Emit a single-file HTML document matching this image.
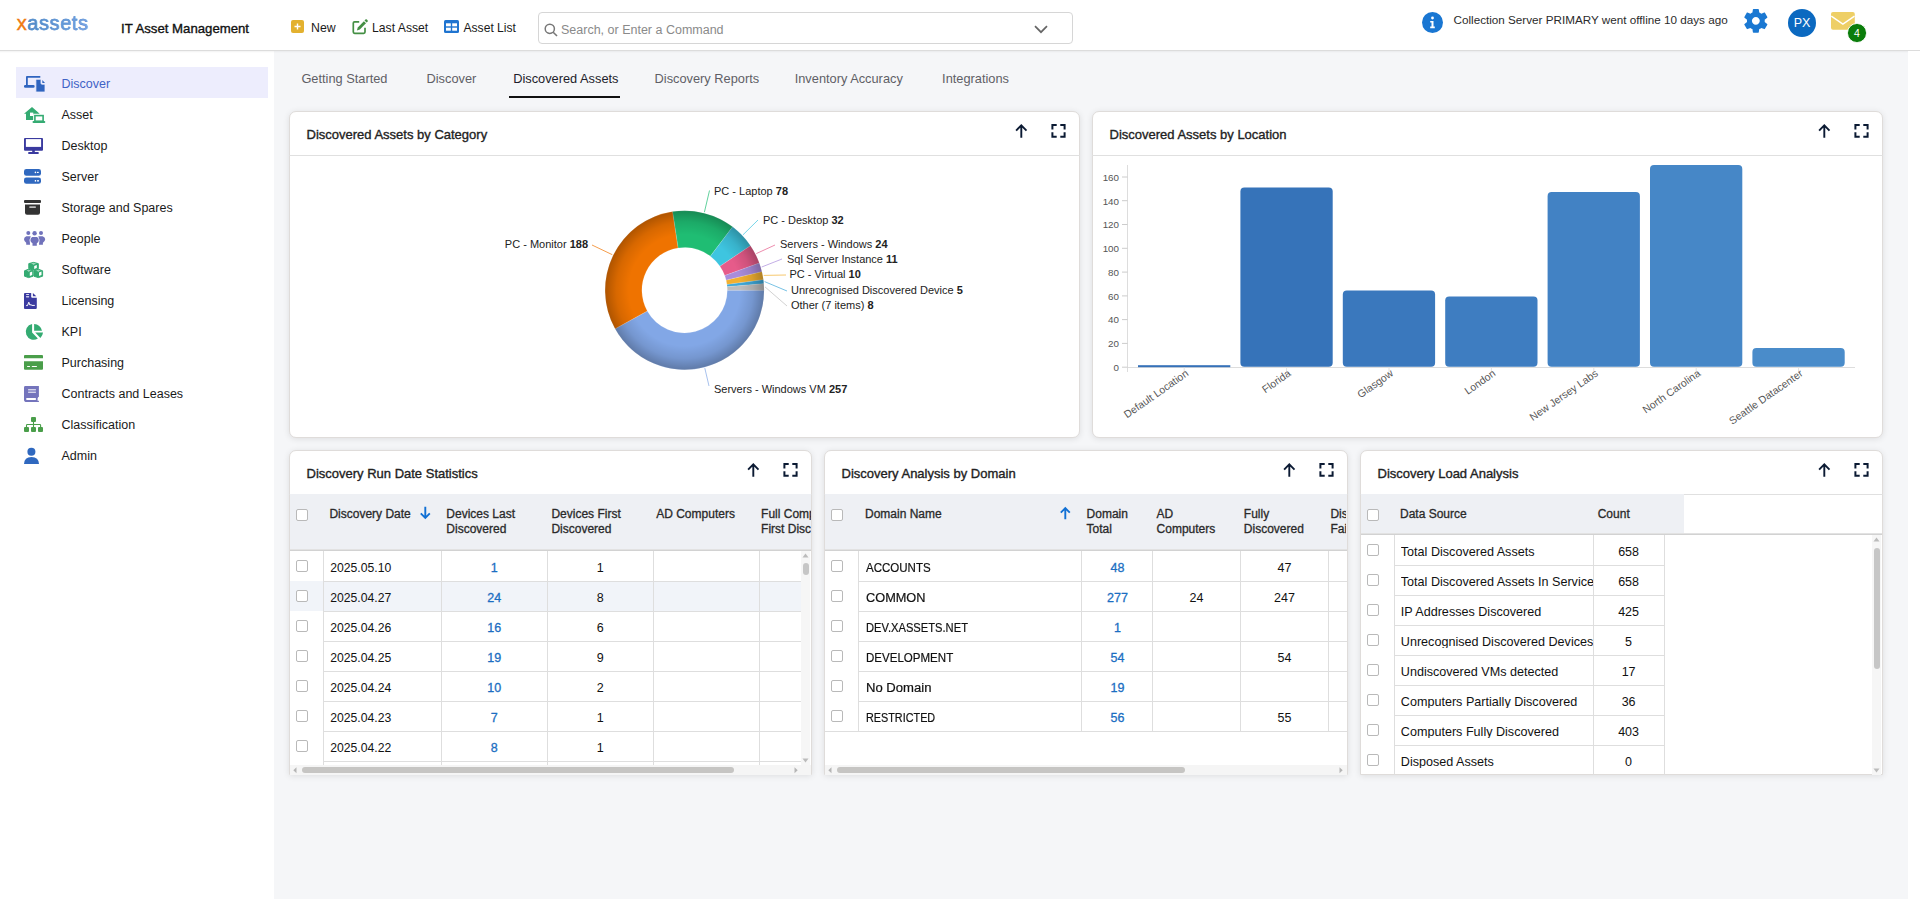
<!DOCTYPE html><html><head><meta charset="utf-8"><style>
html,body{margin:0;padding:0;}
body{width:1920px;height:911px;overflow:hidden;position:relative;background:#fff;font-family:"Liberation Sans",sans-serif;}
.t{position:absolute;white-space:nowrap;line-height:1;}
.r{position:absolute;box-sizing:border-box;}
svg{position:absolute;overflow:visible;}
</style></head><body>
<div class="r" style="left:274px;top:51px;width:1634px;height:848px;background:#f5f6f8;"></div>
<div class="r" style="left:0px;top:0px;width:1920px;height:50px;background:#fff;"></div>
<div class="r" style="left:0px;top:50px;width:1920px;height:1px;background:#dcdcdc;"></div>
<div class="r" style="left:0px;top:51px;width:1920px;height:2px;background:linear-gradient(rgba(0,0,0,0.05),rgba(0,0,0,0));"></div>
<div class="t" style="left:16.8px;top:13.2px;font-size:20px;letter-spacing:0.55px;-webkit-text-stroke:0.45px #5a8fd0;"><span style="color:#ef7a12;-webkit-text-stroke:0.45px #ef7a12">x</span><span style="background:linear-gradient(90deg,#4a8ac4,#7aa6e8);-webkit-background-clip:text;background-clip:text;color:transparent">assets</span></div>
<div class="t" style="left:121px;top:22.23px;font-size:13.2px;color:#111;-webkit-text-stroke:0.35px #111;">IT Asset Management</div>
<svg style="left:291px;top:20px" width="13" height="13" viewBox="0 0 13 13"><rect x="0" y="0" width="13" height="13" rx="2" fill="#e3b12f"/><path d="M6.5 3.5v6M3.5 6.5h6" stroke="#fff" stroke-width="1.4"/></svg>
<div class="t" style="left:311px;top:21.99px;font-size:12.3px;color:#1a1a1a;">New</div>
<svg style="left:352px;top:19px" width="16" height="16" viewBox="0 0 16 16"><path d="M7.2 2.8H2.6a1.3 1.3 0 0 0-1.3 1.3v8.9a1.3 1.3 0 0 0 1.3 1.3h9.1a1.3 1.3 0 0 0 1.3-1.3V8.8" fill="none" stroke="#448f44" stroke-width="1.7"/><path d="M13.4 0.6a1 1 0 0 1 1.5 0l0.6 0.6a1 1 0 0 1 0 1.5l-0.9 0.9-2.1-2.1z" fill="#448f44"/><path d="M11.9 2.2l2.1 2.1-6.2 6.2-2.9 0.9 0.9-2.9z" fill="#448f44"/></svg>
<div class="t" style="left:372px;top:22.07px;font-size:12.2px;color:#1a1a1a;">Last Asset</div>
<svg style="left:444px;top:20px" width="15" height="13" viewBox="0 0 15 13"><rect x="0" y="0" width="15" height="13" rx="1.5" fill="#1f74d0"/><rect x="2" y="3.3" width="4.8" height="3" fill="#fff"/><rect x="8.2" y="3.3" width="4.8" height="3" fill="#fff"/><rect x="2" y="7.7" width="4.8" height="3" fill="#fff"/><rect x="8.2" y="7.7" width="4.8" height="3" fill="#fff"/></svg>
<div class="t" style="left:463.5px;top:22.16px;font-size:12.1px;color:#1a1a1a;">Asset List</div>
<div class="r" style="left:538px;top:12px;width:535px;height:32px;border:1px solid #d6d6d6;border-radius:4px;background:#fff;"></div>
<svg style="left:544px;top:23px" width="14" height="14" viewBox="0 0 14 14"><circle cx="5.8" cy="5.8" r="4.6" fill="none" stroke="#777" stroke-width="1.5"/><path d="M9.2 9.2l3.8 3.8" stroke="#777" stroke-width="1.6"/></svg>
<div class="t" style="left:561px;top:23.72px;font-size:12.5px;color:#8a8a8a;">Search, or Enter a Command</div>
<svg style="left:1034px;top:25px" width="14" height="9" viewBox="0 0 14 9"><path d="M1 1.2l6 6 6-6" fill="none" stroke="#666" stroke-width="1.7"/></svg>
<svg style="left:1421.5px;top:11.5px" width="21" height="21" viewBox="0 0 21 21"><circle cx="10.5" cy="10.5" r="10.5" fill="#1976d2"/><circle cx="10.5" cy="6" r="1.4" fill="#fff"/><path d="M8.2 9h3.3v5.6h1.3v1.6H8.2v-1.6h1.3v-4H8.2z" fill="#fff"/></svg>
<div class="t" style="left:1453.5px;top:13.90px;font-size:11.7px;color:#2b2b2b;">Collection Server PRIMARY went offline 10 days ago</div>
<svg style="left:1741.2px;top:6.2px" width="29.7" height="29.7" viewBox="0 0 24 24"><path fill="#1a78d2" d="M19.14,12.94c0.04-0.3,0.06-0.61,0.06-0.94c0-0.32-0.02-0.64-0.07-0.94l2.03-1.58c0.18-0.14,0.23-0.41,0.12-0.61 l-1.92-3.32c-0.12-0.22-0.37-0.29-0.59-0.22l-2.39,0.96c-0.5-0.38-1.030-0.7-1.62-0.94L14.4,2.81c-0.04-0.24-0.24-0.41-0.48-0.41 h-3.84c-0.24,0-0.43,0.17-0.47,0.41L9.25,5.35C8.66,5.59,8.12,5.92,7.63,6.29L5.24,5.33c-0.22-0.08-0.47,0-0.59,0.22L2.74,8.87 C2.62,9.08,2.66,9.34,2.86,9.48l2.03,1.58C4.84,11.36,4.8,11.690,4.8,12s0.02,0.64,0.07,0.94l-2.03,1.58 c-0.18,0.14-0.23,0.41-0.12,0.61l1.92,3.32c0.12,0.22,0.37,0.29,0.59,0.22l2.39-0.96c0.5,0.38,1.03,0.7,1.62,0.94l0.36,2.54 c0.05,0.24,0.24,0.41,0.48,0.41h3.84c0.24,0,0.44-0.17,0.47-0.41l0.36-2.54c0.59-0.24,1.13-0.56,1.62-0.94l2.39,0.96 c0.22,0.08,0.47,0,0.59-0.22l1.92-3.32c0.12-0.22,0.07-0.47-0.12-0.61L19.14,12.94z M12,15.2c-1.77,0-3.2-1.43-3.2-3.2 s1.43-3.2,3.2-3.2s3.2,1.43,3.2,3.2S13.77,15.2,12,15.2z"/></svg>
<div class="r" style="left:1788px;top:9px;width:28px;height:28px;border-radius:50%;background:#0b69c0;"></div>
<div class="t" style="left:1602px;width:400px;text-align:center;top:17.42px;font-size:12.5px;color:#fff;">PX</div>
<svg style="left:1830.8px;top:12px" width="24" height="18" viewBox="0 0 24 18"><rect x="0" y="0" width="23.8" height="17.7" rx="2" fill="#eecf66"/><path d="M0.3 4.2L11.9 12.2L23.5 4.2" fill="none" stroke="#fff" stroke-width="1.4"/></svg>
<div class="r" style="left:1847.3px;top:23.2px;width:19.4px;height:19.4px;border-radius:50%;background:#0b7d0b;border:1px solid #fff;"></div>
<div class="t" style="left:1657px;width:400px;text-align:center;top:28.11px;font-size:10.5px;color:#fff;">4</div>
<div class="r" style="left:1908px;top:51px;width:12px;height:860px;background:#fff;"></div>
<div class="r" style="left:0px;top:899px;width:1920px;height:12px;background:#fff;"></div>
<div class="r" style="left:16px;top:67px;width:252px;height:31px;background:#ededfd;"></div>
<div class="t" style="left:61.5px;top:77.62px;font-size:12.5px;color:#3f63c6;">Discover</div>
<div class="t" style="left:61.5px;top:108.62px;font-size:12.5px;color:#1a1a1a;">Asset</div>
<div class="t" style="left:61.5px;top:139.62px;font-size:12.5px;color:#1a1a1a;">Desktop</div>
<div class="t" style="left:61.5px;top:170.62px;font-size:12.5px;color:#1a1a1a;">Server</div>
<div class="t" style="left:61.5px;top:201.62px;font-size:12.5px;color:#1a1a1a;">Storage and Spares</div>
<div class="t" style="left:61.5px;top:232.62px;font-size:12.5px;color:#1a1a1a;">People</div>
<div class="t" style="left:61.5px;top:263.62px;font-size:12.5px;color:#1a1a1a;">Software</div>
<div class="t" style="left:61.5px;top:294.62px;font-size:12.5px;color:#1a1a1a;">Licensing</div>
<div class="t" style="left:61.5px;top:325.62px;font-size:12.5px;color:#1a1a1a;">KPI</div>
<div class="t" style="left:61.5px;top:356.62px;font-size:12.5px;color:#1a1a1a;">Purchasing</div>
<div class="t" style="left:61.5px;top:387.62px;font-size:12.5px;color:#1a1a1a;">Contracts and Leases</div>
<div class="t" style="left:61.5px;top:418.62px;font-size:12.5px;color:#1a1a1a;">Classification</div>
<div class="t" style="left:61.5px;top:449.62px;font-size:12.5px;color:#1a1a1a;">Admin</div>
<svg style="left:20px;top:72px" width="30" height="20" viewBox="0 0 30 20"><path d="M6.9 13.2V4.9H20.3" fill="none" stroke="#2f64bf" stroke-width="1.8" stroke-linejoin="round"/><rect x="4" y="12.9" width="10.6" height="2.9" rx="1.2" fill="#2f64bf"/><path d="M16.8 7.3H21V11.2a1 1 0 0 0 1 1H25V20H15.9V8.2a1 1 0 0 1 0.9-0.9z" fill="#2f64bf" stroke="#ededfd" stroke-width="0.8"/><path d="M22.3 7.9L25 10.9H22.3z" fill="#2f64bf"/></svg>
<svg style="left:20px;top:104px" width="30" height="20" viewBox="0 0 30 20"><path d="M4 9.7L12 3L19.7 9.7H13.3V15.9H6V9.7z" fill="#34ab72"/><rect x="10" y="8.6" width="3.3" height="3.4" fill="#fff"/><rect x="13.5" y="10.2" width="11" height="7.8" fill="#fff"/><rect x="14.9" y="11.6" width="8.2" height="5.6" fill="none" stroke="#34ab72" stroke-width="1.6"/><rect x="12.5" y="17" width="12.8" height="2.1" rx="1" fill="#34ab72"/></svg>
<svg style="left:20px;top:134px" width="30" height="20" viewBox="0 0 30 20"><rect x="4" y="4" width="19" height="12.7" rx="1" fill="#3a3a9f"/><rect x="5.9" y="5.1" width="15.2" height="7.8" fill="#fff"/><rect x="12.2" y="16" width="2.6" height="2.6" fill="#3a3a9f"/><rect x="8.1" y="18.1" width="10.7" height="1.9" rx="0.8" fill="#3a3a9f"/></svg>
<svg style="left:20px;top:166px" width="30" height="20" viewBox="0 0 30 20"><rect x="4" y="3" width="17" height="6.7" rx="2.3" fill="#2f68bf"/><rect x="4" y="11.5" width="17" height="6.3" rx="2.3" fill="#2f68bf"/><circle cx="15.4" cy="6.4" r="0.8" fill="#fff"/><rect x="16.9" y="5.8" width="1.9" height="1.2" rx="0.6" fill="#fff"/><rect x="14.8" y="14" width="1.3" height="1.6" fill="#fff"/><rect x="17.2" y="14" width="1.6" height="1.6" fill="#fff"/></svg>
<svg style="left:20px;top:197px" width="30" height="20" viewBox="0 0 30 20"><rect x="4" y="3" width="17" height="3" rx="1" fill="#333"/><path d="M5 7.5H20V15.8a2 2 0 0 1-2 2H7a2 2 0 0 1-2-2z" fill="#333"/><rect x="9.2" y="9.3" width="6.8" height="1.7" rx="0.8" fill="#bbb"/></svg>
<svg style="left:20px;top:228px" width="30" height="20" viewBox="0 0 30 20"><circle cx="8.3" cy="4.9" r="2" fill="#7072bb"/><circle cx="14.6" cy="5.2" r="2.2" fill="#7072bb"/><circle cx="21" cy="4.9" r="2" fill="#7072bb"/><path d="M6.3 8.2H10.8Q9 11.6 9.9 14.5L10 16.8H6.2V14.8Q4 13 4 11.3Q4 9.2 6.3 8.2z" fill="#7072bb"/><path d="M22.6 8.2H18.3Q20 11.6 19.2 14.5L19 16.8H22.9V14.8Q25.2 13 25.2 11.3Q25.2 9.2 22.6 8.2z" fill="#7072bb"/><path d="M12.2 8.9H17Q18.8 9.8 18.8 12.3Q18.8 14.5 16.8 15.2V17.8H12.5V15.2Q10.4 14.5 10.4 12.3Q10.4 9.8 12.2 8.9z" fill="#7072bb"/></svg>
<svg style="left:20px;top:259px" width="30" height="20" viewBox="0 0 30 20"><g fill="#34ab72" stroke="#34ab72" stroke-width="1" stroke-linejoin="round"><path d="M13.5 3.4L18.3 4.6V9.6L13.5 11.2L8.8 9.6V4.6z"/><path d="M8.6 10.2L13 11.8V17.2L8.6 18.6L4.5 17.2V11.8z"/><path d="M18.3 10.2L22.6 11.8V17.2L18.3 18.6L13.9 17.2V11.8z"/></g><path d="M11 4.4H16.2L13.6 5.6z" fill="#fff"/><path d="M14.2 6.9L16.8 6V8.9L14.2 9.9z" fill="#fff"/><path d="M6.7 11.5H11L8.8 12.4z" fill="#fff"/><path d="M9.8 13.4L12.2 12.6V16L9.8 16.9z" fill="#fff"/><path d="M16 11.5H20.5L18.3 12.4z" fill="#fff"/><path d="M19 13.4L21.5 12.6V16L19 16.9z" fill="#fff"/></svg>
<svg style="left:20px;top:290px" width="30" height="20" viewBox="0 0 30 20"><path d="M4.9 3H11.2V6.8a1 1 0 0 0 1 1H16.8V18.1a1 1 0 0 1-1 0.9H4.9a1 1 0 0 1-0.9-0.9V3.9a1 1 0 0 1 0.9-0.9z" fill="#3b3ba0"/><path d="M12.9 3L16.3 6.3H12.9z" fill="#3b3ba0"/><rect x="6" y="4.1" width="3.2" height="0.9" rx="0.4" fill="#dde"/><rect x="6" y="6.1" width="3.2" height="1.3" rx="0.4" fill="#c8c8e8"/><path d="M6.2 15.6H7.5L8.8 12.2L9.8 15L11 14.7L12 15.4H14.8" fill="none" stroke="#fff" stroke-width="1"/></svg>
<svg style="left:20px;top:321px" width="30" height="20" viewBox="0 0 30 20"><path d="M12.1 3.1V11.5L17.9 17.5A7.9 7.9 0 1 1 12.1 3.1z" fill="#34ab72"/><path d="M14.1 3.1A8 8 0 0 1 22 9.8H14.1z" fill="#34ab72"/><path d="M15.2 11.6H23A7.9 7.9 0 0 1 20.4 16.9z" fill="#34ab72"/></svg>
<svg style="left:20px;top:352px" width="30" height="20" viewBox="0 0 30 20"><path d="M5 3H22Q23 3 23 4V6.2H4V4Q4 3 5 3z" fill="#4a9e4a"/><path d="M4 9.3H23V16.8Q23 17.8 22 17.8H5Q4 17.8 4 16.8z" fill="#4a9e4a"/><rect x="7" y="13.9" width="3.1" height="1.2" rx="0.6" fill="#fff"/><rect x="11.7" y="13.9" width="5.3" height="1.2" rx="0.6" fill="#fff"/></svg>
<svg style="left:20px;top:383px" width="30" height="20" viewBox="0 0 30 20"><path d="M5.4 3H18.9V13.8Q18 14.3 17.6 15.2V17.8H18.9V19H6.7Q4 19 4 16.4V4.4Q4 3 5.4 3z" fill="#7474bc"/><rect x="6.1" y="15" width="10" height="1.9" rx="0.9" fill="#fff"/><rect x="8.1" y="6" width="7.8" height="1" fill="#d4d4ea"/><rect x="8.1" y="7.2" width="7.8" height="1.6" fill="#a8a8d6"/><rect x="8.1" y="9" width="7.8" height="1" fill="#d4d4ea"/></svg>
<svg style="left:20px;top:414px" width="30" height="20" viewBox="0 0 30 20"><rect x="11" y="3" width="5" height="5" rx="1" fill="#4a9e4a"/><rect x="4" y="13" width="5" height="5" rx="1" fill="#4a9e4a"/><rect x="11" y="13" width="5" height="5" rx="1" fill="#4a9e4a"/><rect x="18" y="13" width="5" height="5" rx="1" fill="#4a9e4a"/><path d="M13.5 7.5V13.5M6.5 13.5V11.2Q6.5 10.5 7.3 10.5H19.8Q20.6 10.5 20.6 11.2V13.5" fill="none" stroke="#4a9e4a" stroke-width="1.1"/></svg>
<svg style="left:20px;top:445px" width="30" height="20" viewBox="0 0 30 20"><circle cx="11.4" cy="6.7" r="4" fill="#2f68bf"/><path d="M4 19Q4.3 12 11.5 12Q18.7 12 19 19z" fill="#2f68bf"/></svg>
<div class="t" style="left:301.4px;top:73.06px;font-size:12.8px;color:#5f5f66;">Getting Started</div>
<div class="t" style="left:426.5px;top:73.06px;font-size:12.8px;color:#5f5f66;">Discover</div>
<div class="t" style="left:513.2px;top:73.06px;font-size:12.8px;color:#1d1d2b;">Discovered Assets</div>
<div class="t" style="left:654.6px;top:73.06px;font-size:12.8px;color:#5f5f66;">Discovery Reports</div>
<div class="t" style="left:794.7px;top:73.06px;font-size:12.8px;color:#5f5f66;">Inventory Accuracy</div>
<div class="t" style="left:942.1px;top:73.06px;font-size:12.8px;color:#5f5f66;">Integrations</div>
<div class="r" style="left:509px;top:96px;width:111px;height:2px;background:#111;"></div>
<div class="r" style="left:289px;top:111px;width:791px;height:327px;background:#fff;border:1px solid #dfdcda;border-radius:7px;box-shadow:0 1px 6px rgba(0,0,0,0.10);"></div>
<div class="r" style="left:289px;top:155px;width:791px;height:1px;background:#e0e0e0;"></div>
<div class="t" style="left:306.5px;top:128.30px;font-size:13px;color:#222;-webkit-text-stroke:0.35px #222;letter-spacing:0px;">Discovered Assets by Category</div>
<svg style="left:1014px;top:123px" width="16" height="16" viewBox="0 0 16 16"><path d="M7.3 2.4V14.8M2.1 7.6L7.3 2.4L12.5 7.6" fill="none" stroke="#0b1a33" stroke-width="1.9"/></svg>
<svg style="left:1050px;top:123px" width="17" height="16" viewBox="0 0 17 16"><path d="M2.4 6.6V2.1H6.7M10.3 2.1H14.6V6.6M14.6 9.3V13.8H10.3M6.7 13.8H2.4V9.3" fill="none" stroke="#0b1a33" stroke-width="2"/></svg>
<div class="r" style="left:1092px;top:111px;width:791px;height:327px;background:#fff;border:1px solid #dfdcda;border-radius:7px;box-shadow:0 1px 6px rgba(0,0,0,0.10);"></div>
<div class="r" style="left:1092px;top:155px;width:791px;height:1px;background:#e0e0e0;"></div>
<div class="t" style="left:1109.5px;top:128.30px;font-size:13px;color:#222;-webkit-text-stroke:0.35px #222;letter-spacing:0px;">Discovered Assets by Location</div>
<svg style="left:1817px;top:123px" width="16" height="16" viewBox="0 0 16 16"><path d="M7.3 2.4V14.8M2.1 7.6L7.3 2.4L12.5 7.6" fill="none" stroke="#0b1a33" stroke-width="1.9"/></svg>
<svg style="left:1853px;top:123px" width="17" height="16" viewBox="0 0 17 16"><path d="M2.4 6.6V2.1H6.7M10.3 2.1H14.6V6.6M14.6 9.3V13.8H10.3M6.7 13.8H2.4V9.3" fill="none" stroke="#0b1a33" stroke-width="2"/></svg>
<div class="r" style="left:289px;top:450px;width:523px;height:325px;background:#fff;border:1px solid #dfdcda;border-radius:7px 7px 0 0;box-shadow:0 1px 6px rgba(0,0,0,0.10);"></div>
<div class="r" style="left:289px;top:494px;width:523px;height:1px;background:#e0e0e0;"></div>
<div class="t" style="left:306.5px;top:467.30px;font-size:13px;color:#222;-webkit-text-stroke:0.35px #222;letter-spacing:0px;">Discovery Run Date Statistics</div>
<svg style="left:746px;top:462px" width="16" height="16" viewBox="0 0 16 16"><path d="M7.3 2.4V14.8M2.1 7.6L7.3 2.4L12.5 7.6" fill="none" stroke="#0b1a33" stroke-width="1.9"/></svg>
<svg style="left:782px;top:462px" width="17" height="16" viewBox="0 0 17 16"><path d="M2.4 6.6V2.1H6.7M10.3 2.1H14.6V6.6M14.6 9.3V13.8H10.3M6.7 13.8H2.4V9.3" fill="none" stroke="#0b1a33" stroke-width="2"/></svg>
<div class="r" style="left:824px;top:450px;width:524px;height:325px;background:#fff;border:1px solid #dfdcda;border-radius:7px 7px 0 0;box-shadow:0 1px 6px rgba(0,0,0,0.10);"></div>
<div class="r" style="left:824px;top:494px;width:524px;height:1px;background:#e0e0e0;"></div>
<div class="t" style="left:841.5px;top:467.30px;font-size:13px;color:#222;-webkit-text-stroke:0.35px #222;letter-spacing:0px;">Discovery Analysis by Domain</div>
<svg style="left:1282px;top:462px" width="16" height="16" viewBox="0 0 16 16"><path d="M7.3 2.4V14.8M2.1 7.6L7.3 2.4L12.5 7.6" fill="none" stroke="#0b1a33" stroke-width="1.9"/></svg>
<svg style="left:1318px;top:462px" width="17" height="16" viewBox="0 0 17 16"><path d="M2.4 6.6V2.1H6.7M10.3 2.1H14.6V6.6M14.6 9.3V13.8H10.3M6.7 13.8H2.4V9.3" fill="none" stroke="#0b1a33" stroke-width="2"/></svg>
<div class="r" style="left:1360px;top:450px;width:523px;height:325px;background:#fff;border:1px solid #dfdcda;border-radius:7px 7px 0 0;box-shadow:0 1px 6px rgba(0,0,0,0.10);"></div>
<div class="r" style="left:1360px;top:494px;width:523px;height:1px;background:#e0e0e0;"></div>
<div class="t" style="left:1377.5px;top:467.30px;font-size:13px;color:#222;-webkit-text-stroke:0.35px #222;letter-spacing:0px;">Discovery Load Analysis</div>
<svg style="left:1817px;top:462px" width="16" height="16" viewBox="0 0 16 16"><path d="M7.3 2.4V14.8M2.1 7.6L7.3 2.4L12.5 7.6" fill="none" stroke="#0b1a33" stroke-width="1.9"/></svg>
<svg style="left:1853px;top:462px" width="17" height="16" viewBox="0 0 17 16"><path d="M2.4 6.6V2.1H6.7M10.3 2.1H14.6V6.6M14.6 9.3V13.8H10.3M6.7 13.8H2.4V9.3" fill="none" stroke="#0b1a33" stroke-width="2"/></svg>
<svg style="left:0;top:0" width="1920" height="911" viewBox="0 0 1920 911"><defs><radialGradient id="rg" gradientUnits="userSpaceOnUse" cx="684.6" cy="290.2" r="79.5"><stop offset="0.53" stop-color="#000" stop-opacity="0"/><stop offset="0.7" stop-color="#000" stop-opacity="0"/><stop offset="0.86" stop-color="#000" stop-opacity="0.1"/><stop offset="1" stop-color="#000" stop-opacity="0.27"/></radialGradient></defs>
<path d="M764.10 290.20 A79.5 79.5 0 0 1 615.11 328.83 L647.28 310.95 A42.7 42.7 0 0 0 727.30 290.20Z" fill="#82a7e6" stroke="#fff" stroke-width="0.25" stroke-opacity="0.6"/>
<path d="M615.11 328.83 A79.5 79.5 0 0 1 672.63 211.61 L678.17 247.99 A42.7 42.7 0 0 0 647.28 310.95Z" fill="#ef7300" stroke="#fff" stroke-width="0.25" stroke-opacity="0.6"/>
<path d="M672.63 211.61 A79.5 79.5 0 0 1 732.61 226.83 L710.38 256.16 A42.7 42.7 0 0 0 678.17 247.99Z" fill="#1fbd73" stroke="#fff" stroke-width="0.25" stroke-opacity="0.6"/>
<path d="M732.61 226.83 A79.5 79.5 0 0 1 750.46 245.67 L719.97 266.28 A42.7 42.7 0 0 0 710.38 256.16Z" fill="#3ec5e0" stroke="#fff" stroke-width="0.25" stroke-opacity="0.6"/>
<path d="M750.46 245.67 A79.5 79.5 0 0 1 759.32 263.05 L724.73 275.62 A42.7 42.7 0 0 0 719.97 266.28Z" fill="#e65b8a" stroke="#fff" stroke-width="0.25" stroke-opacity="0.6"/>
<path d="M759.32 263.05 A79.5 79.5 0 0 1 761.90 271.63 L726.12 280.23 A42.7 42.7 0 0 0 724.73 275.62Z" fill="#a98cdc" stroke="#fff" stroke-width="0.25" stroke-opacity="0.6"/>
<path d="M761.90 271.63 A79.5 79.5 0 0 1 763.40 279.64 L726.92 284.53 A42.7 42.7 0 0 0 726.12 280.23Z" fill="#f2b030" stroke="#fff" stroke-width="0.25" stroke-opacity="0.6"/>
<path d="M763.40 279.64 A79.5 79.5 0 0 1 763.83 283.69 L727.16 286.70 A42.7 42.7 0 0 0 726.92 284.53Z" fill="#3ea8d8" stroke="#fff" stroke-width="0.25" stroke-opacity="0.6"/>
<path d="M763.83 283.69 A79.5 79.5 0 0 1 764.10 290.20 L727.30 290.20 A42.7 42.7 0 0 0 727.16 286.70Z" fill="#bdbdbd" stroke="#fff" stroke-width="0.25" stroke-opacity="0.6"/>
<circle cx="684.6" cy="290.2" r="61.1" fill="none" stroke="url(#rg)" stroke-width="36.8"/>
<path d="M704.8 368.1 L709 386" stroke="#82a7e6" stroke-width="1" fill="none" opacity="0.7"/>
<text x="714" y="393" font-family="Liberation Sans" font-size="11" fill="#222" text-anchor="start">Servers - Windows VM <tspan font-weight="700">257</tspan></text>
<path d="M612.3 254.7 L592 245" stroke="#ef7300" stroke-width="1" fill="none" opacity="0.7"/>
<text x="588" y="248" font-family="Liberation Sans" font-size="11" fill="#222" text-anchor="end">PC - Monitor <tspan font-weight="700">188</tspan></text>
<path d="M704.4 212.2 L709.5 190.5" stroke="#1fbd73" stroke-width="1" fill="none" opacity="0.7"/>
<text x="714" y="194.5" font-family="Liberation Sans" font-size="11" fill="#222" text-anchor="start">PC - Laptop <tspan font-weight="700">78</tspan></text>
<path d="M743.0 234.8 L758 220" stroke="#3ec5e0" stroke-width="1" fill="none" opacity="0.7"/>
<text x="763" y="224" font-family="Liberation Sans" font-size="11" fill="#222" text-anchor="start">PC - Desktop <tspan font-weight="700">32</tspan></text>
<path d="M756.3 253.6 L775 245" stroke="#e65b8a" stroke-width="1" fill="none" opacity="0.7"/>
<text x="780" y="247.5" font-family="Liberation Sans" font-size="11" fill="#222" text-anchor="start">Servers - Windows <tspan font-weight="700">24</tspan></text>
<path d="M761.7 267.0 L782 259" stroke="#a98cdc" stroke-width="1" fill="none" opacity="0.7"/>
<text x="787" y="262.5" font-family="Liberation Sans" font-size="11" fill="#222" text-anchor="start">Sql Server Instance <tspan font-weight="700">11</tspan></text>
<path d="M763.7 275.4 L786 275" stroke="#f2b030" stroke-width="1" fill="none" opacity="0.7"/>
<text x="789.5" y="277.5" font-family="Liberation Sans" font-size="11" fill="#222" text-anchor="start">PC - Virtual <tspan font-weight="700">10</tspan></text>
<path d="M764.6 281.6 L787 291" stroke="#3ea8d8" stroke-width="1" fill="none" opacity="0.7"/>
<text x="791" y="293.5" font-family="Liberation Sans" font-size="11" fill="#222" text-anchor="start">Unrecognised Discovered Device <tspan font-weight="700">5</tspan></text>
<path d="M765.0 286.9 L787 306" stroke="#bdbdbd" stroke-width="1" fill="none" opacity="0.7"/>
<text x="791" y="308.5" font-family="Liberation Sans" font-size="11" fill="#222" text-anchor="start">Other (7 items) <tspan font-weight="700">8</tspan></text>
</svg>
<svg style="left:0;top:0" width="1920" height="911" viewBox="0 0 1920 911">
<path d="M1127.5 165 V372" stroke="#ddd" stroke-width="1"/>
<path d="M1127.5 367.5 H1855" stroke="#ddd" stroke-width="1"/>
<path d="M1122 367.2 H1127.5" stroke="#ccc" stroke-width="1"/>
<text x="1119" y="371.0" font-family="Liberation Sans" font-size="9.8" fill="#555" text-anchor="end">0</text>
<path d="M1122 343.4 H1127.5" stroke="#ccc" stroke-width="1"/>
<text x="1119" y="347.2" font-family="Liberation Sans" font-size="9.8" fill="#555" text-anchor="end">20</text>
<path d="M1122 319.6 H1127.5" stroke="#ccc" stroke-width="1"/>
<text x="1119" y="323.4" font-family="Liberation Sans" font-size="9.8" fill="#555" text-anchor="end">40</text>
<path d="M1122 295.9 H1127.5" stroke="#ccc" stroke-width="1"/>
<text x="1119" y="299.7" font-family="Liberation Sans" font-size="9.8" fill="#555" text-anchor="end">60</text>
<path d="M1122 272.1 H1127.5" stroke="#ccc" stroke-width="1"/>
<text x="1119" y="275.9" font-family="Liberation Sans" font-size="9.8" fill="#555" text-anchor="end">80</text>
<path d="M1122 248.3 H1127.5" stroke="#ccc" stroke-width="1"/>
<text x="1119" y="252.1" font-family="Liberation Sans" font-size="9.8" fill="#555" text-anchor="end">100</text>
<path d="M1122 224.5 H1127.5" stroke="#ccc" stroke-width="1"/>
<text x="1119" y="228.3" font-family="Liberation Sans" font-size="9.8" fill="#555" text-anchor="end">120</text>
<path d="M1122 200.7 H1127.5" stroke="#ccc" stroke-width="1"/>
<text x="1119" y="204.5" font-family="Liberation Sans" font-size="9.8" fill="#555" text-anchor="end">140</text>
<path d="M1122 177.0 H1127.5" stroke="#ccc" stroke-width="1"/>
<text x="1119" y="180.8" font-family="Liberation Sans" font-size="9.8" fill="#555" text-anchor="end">160</text>
<rect x="1138.0" y="365.2" width="92.3" height="2.0" fill="#3571b8"/>
<path d="M1184.2 367.5 V372" stroke="#e2e2e2" stroke-width="1"/>
<text x="1189.2" y="375" font-family="Liberation Sans" font-size="10.5" fill="#555" text-anchor="end" transform="rotate(-35 1189.2 375)">Default Location</text>
<rect x="1240.4" y="187.5" width="92.3" height="179.2" rx="4" ry="4" fill="#3673b9"/>
<path d="M1286.6 367.5 V372" stroke="#e2e2e2" stroke-width="1"/>
<text x="1291.6" y="375" font-family="Liberation Sans" font-size="10.5" fill="#555" text-anchor="end" transform="rotate(-35 1291.6 375)">Florida</text>
<rect x="1342.8" y="290.5" width="92.3" height="76.2" rx="4" ry="4" fill="#3a78bd"/>
<path d="M1389.0 367.5 V372" stroke="#e2e2e2" stroke-width="1"/>
<text x="1394.0" y="375" font-family="Liberation Sans" font-size="10.5" fill="#555" text-anchor="end" transform="rotate(-35 1394.0 375)">Glasgow</text>
<rect x="1445.2" y="296.5" width="92.3" height="70.2" rx="4" ry="4" fill="#3e7dc1"/>
<path d="M1491.4 367.5 V372" stroke="#e2e2e2" stroke-width="1"/>
<text x="1496.4" y="375" font-family="Liberation Sans" font-size="10.5" fill="#555" text-anchor="end" transform="rotate(-35 1496.4 375)">London</text>
<rect x="1547.6" y="192.0" width="92.3" height="174.7" rx="4" ry="4" fill="#4282c4"/>
<path d="M1593.8 367.5 V372" stroke="#e2e2e2" stroke-width="1"/>
<text x="1598.8" y="375" font-family="Liberation Sans" font-size="10.5" fill="#555" text-anchor="end" transform="rotate(-35 1598.8 375)">New Jersey Labs</text>
<rect x="1650.0" y="165.0" width="92.3" height="201.7" rx="4" ry="4" fill="#4687c7"/>
<path d="M1696.2 367.5 V372" stroke="#e2e2e2" stroke-width="1"/>
<text x="1701.2" y="375" font-family="Liberation Sans" font-size="10.5" fill="#555" text-anchor="end" transform="rotate(-35 1701.2 375)">North Carolina</text>
<rect x="1752.4" y="348.0" width="92.3" height="18.7" rx="4" ry="4" fill="#4a8cca"/>
<path d="M1798.6 367.5 V372" stroke="#e2e2e2" stroke-width="1"/>
<text x="1803.6" y="375" font-family="Liberation Sans" font-size="10.5" fill="#555" text-anchor="end" transform="rotate(-35 1803.6 375)">Seattle Datacenter</text>
</svg>
<div class="r" style="left:290px;top:494px;width:521px;height:55px;background:#eef0f4;"></div>
<div class="r" style="left:290px;top:549px;width:521px;height:1px;background:#e2e2e2;"></div>
<div class="r" style="left:290px;top:550px;width:521px;height:1px;background:#d2d2d2;"></div>
<div class="r" style="left:296px;top:509px;width:12px;height:12px;border:1px solid #b9b9b9;border-radius:2px;background:#fff;"></div>
<div class="t" style="top:508.14px;font-size:12px;color:#2a2a2a;-webkit-text-stroke:0.3px #2a2a2a;left:329.4px;">Discovery Date</div>
<svg style="left:419.8px;top:506px" width="11" height="13" viewBox="0 0 11 13"><path d="M5.3 0.8v11M0.8 7.3l4.5 4.5 4.5-4.5" fill="none" stroke="#1170d4" stroke-width="1.9"/></svg>
<div class="t" style="top:508.14px;font-size:12px;color:#2a2a2a;-webkit-text-stroke:0.3px #2a2a2a;left:446.3px;">Devices Last</div>
<div class="t" style="top:523.44px;font-size:12px;color:#2a2a2a;-webkit-text-stroke:0.3px #2a2a2a;left:446.3px;">Discovered</div>
<div class="t" style="top:508.14px;font-size:12px;color:#2a2a2a;-webkit-text-stroke:0.3px #2a2a2a;left:551.4px;">Devices First</div>
<div class="t" style="top:523.44px;font-size:12px;color:#2a2a2a;-webkit-text-stroke:0.3px #2a2a2a;left:551.4px;">Discovered</div>
<div class="t" style="top:508.14px;font-size:12px;color:#2a2a2a;-webkit-text-stroke:0.3px #2a2a2a;left:656.2px;">AD Computers</div>
<div class="t" style="top:508.14px;font-size:12px;color:#2a2a2a;-webkit-text-stroke:0.3px #2a2a2a;left:761.1px;width:50px;overflow:hidden;">Full Comp</div>
<div class="t" style="top:523.44px;font-size:12px;color:#2a2a2a;-webkit-text-stroke:0.3px #2a2a2a;left:761.1px;width:50px;overflow:hidden;">First Disc</div>
<div class="r" style="left:290px;top:581px;width:511px;height:30px;background:#f1f4f9;"></div>
<div class="r" style="left:296px;top:559.6px;width:12px;height:12px;border:1px solid #b9b9b9;border-radius:2px;background:#fff;"></div>
<div class="t" style="top:562.17px;font-size:12.2px;color:#111;left:330.2px;">2025.05.10</div>
<div class="t" style="top:561.92px;font-size:12.5px;color:#1b6ec2;-webkit-text-stroke:0.3px #1b6ec2;left:394.2px;width:200px;text-align:center;">1</div>
<div class="t" style="top:561.92px;font-size:12.5px;color:#111;left:500.29999999999995px;width:200px;text-align:center;">1</div>
<div class="r" style="left:323px;top:581px;width:478px;height:1px;background:#dedede;"></div>
<div class="r" style="left:296px;top:589.6px;width:12px;height:12px;border:1px solid #b9b9b9;border-radius:2px;background:#fff;"></div>
<div class="t" style="top:592.17px;font-size:12.2px;color:#111;left:330.2px;">2025.04.27</div>
<div class="t" style="top:591.92px;font-size:12.5px;color:#1b6ec2;-webkit-text-stroke:0.3px #1b6ec2;left:394.2px;width:200px;text-align:center;">24</div>
<div class="t" style="top:591.92px;font-size:12.5px;color:#111;left:500.29999999999995px;width:200px;text-align:center;">8</div>
<div class="r" style="left:323px;top:611px;width:478px;height:1px;background:#dedede;"></div>
<div class="r" style="left:296px;top:619.6px;width:12px;height:12px;border:1px solid #b9b9b9;border-radius:2px;background:#fff;"></div>
<div class="t" style="top:622.17px;font-size:12.2px;color:#111;left:330.2px;">2025.04.26</div>
<div class="t" style="top:621.92px;font-size:12.5px;color:#1b6ec2;-webkit-text-stroke:0.3px #1b6ec2;left:394.2px;width:200px;text-align:center;">16</div>
<div class="t" style="top:621.92px;font-size:12.5px;color:#111;left:500.29999999999995px;width:200px;text-align:center;">6</div>
<div class="r" style="left:323px;top:641px;width:478px;height:1px;background:#dedede;"></div>
<div class="r" style="left:296px;top:649.6px;width:12px;height:12px;border:1px solid #b9b9b9;border-radius:2px;background:#fff;"></div>
<div class="t" style="top:652.17px;font-size:12.2px;color:#111;left:330.2px;">2025.04.25</div>
<div class="t" style="top:651.92px;font-size:12.5px;color:#1b6ec2;-webkit-text-stroke:0.3px #1b6ec2;left:394.2px;width:200px;text-align:center;">19</div>
<div class="t" style="top:651.92px;font-size:12.5px;color:#111;left:500.29999999999995px;width:200px;text-align:center;">9</div>
<div class="r" style="left:323px;top:671px;width:478px;height:1px;background:#dedede;"></div>
<div class="r" style="left:296px;top:679.6px;width:12px;height:12px;border:1px solid #b9b9b9;border-radius:2px;background:#fff;"></div>
<div class="t" style="top:682.17px;font-size:12.2px;color:#111;left:330.2px;">2025.04.24</div>
<div class="t" style="top:681.92px;font-size:12.5px;color:#1b6ec2;-webkit-text-stroke:0.3px #1b6ec2;left:394.2px;width:200px;text-align:center;">10</div>
<div class="t" style="top:681.92px;font-size:12.5px;color:#111;left:500.29999999999995px;width:200px;text-align:center;">2</div>
<div class="r" style="left:323px;top:701px;width:478px;height:1px;background:#dedede;"></div>
<div class="r" style="left:296px;top:709.6px;width:12px;height:12px;border:1px solid #b9b9b9;border-radius:2px;background:#fff;"></div>
<div class="t" style="top:712.17px;font-size:12.2px;color:#111;left:330.2px;">2025.04.23</div>
<div class="t" style="top:711.92px;font-size:12.5px;color:#1b6ec2;-webkit-text-stroke:0.3px #1b6ec2;left:394.2px;width:200px;text-align:center;">7</div>
<div class="t" style="top:711.92px;font-size:12.5px;color:#111;left:500.29999999999995px;width:200px;text-align:center;">1</div>
<div class="r" style="left:323px;top:731px;width:478px;height:1px;background:#dedede;"></div>
<div class="r" style="left:296px;top:739.6px;width:12px;height:12px;border:1px solid #b9b9b9;border-radius:2px;background:#fff;"></div>
<div class="t" style="top:742.17px;font-size:12.2px;color:#111;left:330.2px;">2025.04.22</div>
<div class="t" style="top:741.92px;font-size:12.5px;color:#1b6ec2;-webkit-text-stroke:0.3px #1b6ec2;left:394.2px;width:200px;text-align:center;">8</div>
<div class="t" style="top:741.92px;font-size:12.5px;color:#111;left:500.29999999999995px;width:200px;text-align:center;">1</div>
<div class="r" style="left:323px;top:761px;width:478px;height:1px;background:#dedede;"></div>
<div class="r" style="left:323px;top:551px;width:1px;height:214px;background:#dedede;"></div>
<div class="r" style="left:441px;top:551px;width:1px;height:214px;background:#dedede;"></div>
<div class="r" style="left:547px;top:551px;width:1px;height:214px;background:#dedede;"></div>
<div class="r" style="left:653px;top:551px;width:1px;height:214px;background:#dedede;"></div>
<div class="r" style="left:759px;top:551px;width:1px;height:214px;background:#dedede;"></div>
<div class="r" style="left:801px;top:551px;width:9px;height:214px;background:#f6f6f6;"></div>
<div class="r" style="left:802.5px;top:563px;width:6px;height:12px;background:#c6c6c6;border-radius:3px;"></div>
<svg style="left:802px;top:553px" width="7" height="5"><path d="M0.5 4.5h6L3.5 0.5z" fill="#bbb"/></svg>
<svg style="left:802px;top:758px" width="7" height="5"><path d="M0.5 0.5h6L3.5 4.5z" fill="#bbb"/></svg>
<div class="r" style="left:290px;top:765px;width:512px;height:10px;background:#f5f5f5;"></div>
<div class="r" style="left:301.5px;top:767px;width:432.0px;height:6px;background:#c6c5c3;border-radius:3px;"></div>
<svg style="left:292.5px;top:767px" width="5" height="7"><path d="M3.5 0.2v6L0.3 3.2z" fill="#b5b5b5"/></svg>
<svg style="left:794px;top:767px" width="5" height="7"><path d="M0.5 0.2v6L3.7 3.2z" fill="#b5b5b5"/></svg>
<div class="r" style="left:801px;top:765px;width:10px;height:10px;background:#f5f5f5;"></div>
<div class="r" style="left:825px;top:494px;width:522px;height:55px;background:#eef0f4;"></div>
<div class="r" style="left:825px;top:549px;width:522px;height:1px;background:#e2e2e2;"></div>
<div class="r" style="left:825px;top:550px;width:522px;height:1px;background:#d2d2d2;"></div>
<div class="r" style="left:831px;top:509px;width:12px;height:12px;border:1px solid #b9b9b9;border-radius:2px;background:#fff;"></div>
<div class="t" style="top:508.14px;font-size:12px;color:#2a2a2a;-webkit-text-stroke:0.3px #2a2a2a;left:865px;">Domain Name</div>
<svg style="left:1059.8px;top:507.1px" width="11" height="13" viewBox="0 0 11 13"><path d="M5.3 12.2V1.2M0.8 5.7l4.5-4.5 4.5 4.5" fill="none" stroke="#1170d4" stroke-width="1.9"/></svg>
<div class="t" style="top:508.14px;font-size:12px;color:#2a2a2a;-webkit-text-stroke:0.3px #2a2a2a;left:1086.6px;">Domain</div>
<div class="t" style="top:523.44px;font-size:12px;color:#2a2a2a;-webkit-text-stroke:0.3px #2a2a2a;left:1086.6px;">Total</div>
<div class="t" style="top:508.14px;font-size:12px;color:#2a2a2a;-webkit-text-stroke:0.3px #2a2a2a;left:1156.6px;">AD</div>
<div class="t" style="top:523.44px;font-size:12px;color:#2a2a2a;-webkit-text-stroke:0.3px #2a2a2a;left:1156.6px;">Computers</div>
<div class="t" style="top:508.14px;font-size:12px;color:#2a2a2a;-webkit-text-stroke:0.3px #2a2a2a;left:1243.8px;">Fully</div>
<div class="t" style="top:523.44px;font-size:12px;color:#2a2a2a;-webkit-text-stroke:0.3px #2a2a2a;left:1243.8px;">Discovered</div>
<div class="t" style="top:508.14px;font-size:12px;color:#2a2a2a;-webkit-text-stroke:0.3px #2a2a2a;left:1330.4px;width:16px;overflow:hidden;">Dis</div>
<div class="t" style="top:523.44px;font-size:12px;color:#2a2a2a;-webkit-text-stroke:0.3px #2a2a2a;left:1330.4px;width:16px;overflow:hidden;">Fail</div>
<div class="r" style="left:831px;top:559.6px;width:12px;height:12px;border:1px solid #b9b9b9;border-radius:2px;background:#fff;"></div>
<div class="t" style="left:865.5px;top:561.92px;font-size:12.5px;color:#111;-webkit-text-stroke:0.2px #111;transform:scaleX(0.922);transform-origin:0 0;">ACCOUNTS</div>
<div class="t" style="top:561.92px;font-size:12.5px;color:#1b6ec2;-webkit-text-stroke:0.3px #1b6ec2;left:1017.5px;width:200px;text-align:center;">48</div>
<div class="t" style="top:561.92px;font-size:12.5px;color:#111;left:1096.5px;width:200px;text-align:center;"></div>
<div class="t" style="top:561.92px;font-size:12.5px;color:#111;left:1184.5px;width:200px;text-align:center;">47</div>
<div class="r" style="left:858px;top:581px;width:489px;height:1px;background:#dedede;"></div>
<div class="r" style="left:831px;top:589.6px;width:12px;height:12px;border:1px solid #b9b9b9;border-radius:2px;background:#fff;"></div>
<div class="t" style="left:865.5px;top:591.92px;font-size:12.5px;color:#111;-webkit-text-stroke:0.2px #111;transform:scaleX(1.02);transform-origin:0 0;">COMMON</div>
<div class="t" style="top:591.92px;font-size:12.5px;color:#1b6ec2;-webkit-text-stroke:0.3px #1b6ec2;left:1017.5px;width:200px;text-align:center;">277</div>
<div class="t" style="top:591.92px;font-size:12.5px;color:#111;left:1096.5px;width:200px;text-align:center;">24</div>
<div class="t" style="top:591.92px;font-size:12.5px;color:#111;left:1184.5px;width:200px;text-align:center;">247</div>
<div class="r" style="left:858px;top:611px;width:489px;height:1px;background:#dedede;"></div>
<div class="r" style="left:831px;top:619.6px;width:12px;height:12px;border:1px solid #b9b9b9;border-radius:2px;background:#fff;"></div>
<div class="t" style="left:865.5px;top:621.92px;font-size:12.5px;color:#111;-webkit-text-stroke:0.2px #111;transform:scaleX(0.893);transform-origin:0 0;">DEV.XASSETS.NET</div>
<div class="t" style="top:621.92px;font-size:12.5px;color:#1b6ec2;-webkit-text-stroke:0.3px #1b6ec2;left:1017.5px;width:200px;text-align:center;">1</div>
<div class="t" style="top:621.92px;font-size:12.5px;color:#111;left:1096.5px;width:200px;text-align:center;"></div>
<div class="t" style="top:621.92px;font-size:12.5px;color:#111;left:1184.5px;width:200px;text-align:center;"></div>
<div class="r" style="left:858px;top:641px;width:489px;height:1px;background:#dedede;"></div>
<div class="r" style="left:831px;top:649.6px;width:12px;height:12px;border:1px solid #b9b9b9;border-radius:2px;background:#fff;"></div>
<div class="t" style="left:865.5px;top:651.92px;font-size:12.5px;color:#111;-webkit-text-stroke:0.2px #111;transform:scaleX(0.923);transform-origin:0 0;">DEVELOPMENT</div>
<div class="t" style="top:651.92px;font-size:12.5px;color:#1b6ec2;-webkit-text-stroke:0.3px #1b6ec2;left:1017.5px;width:200px;text-align:center;">54</div>
<div class="t" style="top:651.92px;font-size:12.5px;color:#111;left:1096.5px;width:200px;text-align:center;"></div>
<div class="t" style="top:651.92px;font-size:12.5px;color:#111;left:1184.5px;width:200px;text-align:center;">54</div>
<div class="r" style="left:858px;top:671px;width:489px;height:1px;background:#dedede;"></div>
<div class="r" style="left:831px;top:679.6px;width:12px;height:12px;border:1px solid #b9b9b9;border-radius:2px;background:#fff;"></div>
<div class="t" style="left:865.5px;top:681.92px;font-size:12.5px;color:#111;-webkit-text-stroke:0.2px #111;transform:scaleX(1.047);transform-origin:0 0;">No Domain</div>
<div class="t" style="top:681.92px;font-size:12.5px;color:#1b6ec2;-webkit-text-stroke:0.3px #1b6ec2;left:1017.5px;width:200px;text-align:center;">19</div>
<div class="t" style="top:681.92px;font-size:12.5px;color:#111;left:1096.5px;width:200px;text-align:center;"></div>
<div class="t" style="top:681.92px;font-size:12.5px;color:#111;left:1184.5px;width:200px;text-align:center;"></div>
<div class="r" style="left:858px;top:701px;width:489px;height:1px;background:#dedede;"></div>
<div class="r" style="left:831px;top:709.6px;width:12px;height:12px;border:1px solid #b9b9b9;border-radius:2px;background:#fff;"></div>
<div class="t" style="left:865.5px;top:711.92px;font-size:12.5px;color:#111;-webkit-text-stroke:0.2px #111;transform:scaleX(0.866);transform-origin:0 0;">RESTRICTED</div>
<div class="t" style="top:711.92px;font-size:12.5px;color:#1b6ec2;-webkit-text-stroke:0.3px #1b6ec2;left:1017.5px;width:200px;text-align:center;">56</div>
<div class="t" style="top:711.92px;font-size:12.5px;color:#111;left:1096.5px;width:200px;text-align:center;"></div>
<div class="t" style="top:711.92px;font-size:12.5px;color:#111;left:1184.5px;width:200px;text-align:center;">55</div>
<div class="r" style="left:825px;top:731px;width:522px;height:1px;background:#dedede;"></div>
<div class="r" style="left:858px;top:551px;width:1px;height:180px;background:#dedede;"></div>
<div class="r" style="left:1081px;top:551px;width:1px;height:180px;background:#dedede;"></div>
<div class="r" style="left:1152px;top:551px;width:1px;height:180px;background:#dedede;"></div>
<div class="r" style="left:1240px;top:551px;width:1px;height:180px;background:#dedede;"></div>
<div class="r" style="left:1328px;top:551px;width:1px;height:180px;background:#dedede;"></div>
<div class="r" style="left:825px;top:765px;width:522px;height:10px;background:#f5f5f5;"></div>
<div class="r" style="left:837px;top:767px;width:348px;height:6px;background:#c6c5c3;border-radius:3px;"></div>
<svg style="left:827.5px;top:767px" width="5" height="7"><path d="M3.5 0.2v6L0.3 3.2z" fill="#b5b5b5"/></svg>
<svg style="left:1339px;top:767px" width="5" height="7"><path d="M0.5 0.2v6L3.7 3.2z" fill="#b5b5b5"/></svg>
<div class="r" style="left:1361px;top:494px;width:323px;height:40px;background:#eef0f4;"></div>
<div class="r" style="left:1361px;top:533px;width:521px;height:1px;background:#e2e2e2;"></div>
<div class="r" style="left:1361px;top:534px;width:521px;height:1px;background:#d2d2d2;"></div>
<div class="r" style="left:1367px;top:509px;width:12px;height:12px;border:1px solid #b9b9b9;border-radius:2px;background:#fff;"></div>
<div class="t" style="top:508.34px;font-size:12px;color:#2a2a2a;-webkit-text-stroke:0.3px #2a2a2a;left:1400px;">Data Source</div>
<div class="t" style="top:508.34px;font-size:12px;color:#2a2a2a;-webkit-text-stroke:0.3px #2a2a2a;left:1597.7px;">Count</div>
<div class="r" style="left:1367px;top:543.6px;width:12px;height:12px;border:1px solid #b9b9b9;border-radius:2px;background:#fff;"></div>
<div class="t" style="top:545.83px;font-size:12.6px;color:#111;left:1400.8px;width:192px;overflow:hidden;">Total Discovered Assets</div>
<div class="t" style="top:545.92px;font-size:12.5px;color:#111;left:1528.6px;width:200px;text-align:center;">658</div>
<div class="r" style="left:1394px;top:565px;width:270px;height:1px;background:#dedede;"></div>
<div class="r" style="left:1367px;top:573.6px;width:12px;height:12px;border:1px solid #b9b9b9;border-radius:2px;background:#fff;"></div>
<div class="t" style="top:575.83px;font-size:12.6px;color:#111;left:1400.8px;width:192px;overflow:hidden;">Total Discovered Assets In Service</div>
<div class="t" style="top:575.92px;font-size:12.5px;color:#111;left:1528.6px;width:200px;text-align:center;">658</div>
<div class="r" style="left:1394px;top:595px;width:270px;height:1px;background:#dedede;"></div>
<div class="r" style="left:1367px;top:603.6px;width:12px;height:12px;border:1px solid #b9b9b9;border-radius:2px;background:#fff;"></div>
<div class="t" style="top:605.83px;font-size:12.6px;color:#111;left:1400.8px;width:192px;overflow:hidden;">IP Addresses Discovered</div>
<div class="t" style="top:605.92px;font-size:12.5px;color:#111;left:1528.6px;width:200px;text-align:center;">425</div>
<div class="r" style="left:1394px;top:625px;width:270px;height:1px;background:#dedede;"></div>
<div class="r" style="left:1367px;top:633.6px;width:12px;height:12px;border:1px solid #b9b9b9;border-radius:2px;background:#fff;"></div>
<div class="t" style="top:635.83px;font-size:12.6px;color:#111;left:1400.8px;width:192px;overflow:hidden;">Unrecognised Discovered Devices</div>
<div class="t" style="top:635.92px;font-size:12.5px;color:#111;left:1528.6px;width:200px;text-align:center;">5</div>
<div class="r" style="left:1394px;top:655px;width:270px;height:1px;background:#dedede;"></div>
<div class="r" style="left:1367px;top:663.6px;width:12px;height:12px;border:1px solid #b9b9b9;border-radius:2px;background:#fff;"></div>
<div class="t" style="top:665.83px;font-size:12.6px;color:#111;left:1400.8px;width:192px;overflow:hidden;">Undiscovered VMs detected</div>
<div class="t" style="top:665.92px;font-size:12.5px;color:#111;left:1528.6px;width:200px;text-align:center;">17</div>
<div class="r" style="left:1394px;top:685px;width:270px;height:1px;background:#dedede;"></div>
<div class="r" style="left:1367px;top:693.6px;width:12px;height:12px;border:1px solid #b9b9b9;border-radius:2px;background:#fff;"></div>
<div class="t" style="top:695.83px;font-size:12.6px;color:#111;left:1400.8px;width:192px;overflow:hidden;">Computers Partially Discovered</div>
<div class="t" style="top:695.92px;font-size:12.5px;color:#111;left:1528.6px;width:200px;text-align:center;">36</div>
<div class="r" style="left:1394px;top:715px;width:270px;height:1px;background:#dedede;"></div>
<div class="r" style="left:1367px;top:723.6px;width:12px;height:12px;border:1px solid #b9b9b9;border-radius:2px;background:#fff;"></div>
<div class="t" style="top:725.83px;font-size:12.6px;color:#111;left:1400.8px;width:192px;overflow:hidden;">Computers Fully Discovered</div>
<div class="t" style="top:725.92px;font-size:12.5px;color:#111;left:1528.6px;width:200px;text-align:center;">403</div>
<div class="r" style="left:1394px;top:745px;width:270px;height:1px;background:#dedede;"></div>
<div class="r" style="left:1367px;top:753.6px;width:12px;height:12px;border:1px solid #b9b9b9;border-radius:2px;background:#fff;"></div>
<div class="t" style="top:755.83px;font-size:12.6px;color:#111;left:1400.8px;width:192px;overflow:hidden;">Disposed Assets</div>
<div class="t" style="top:755.92px;font-size:12.5px;color:#111;left:1528.6px;width:200px;text-align:center;">0</div>
<div class="r" style="left:1394px;top:535px;width:1px;height:240px;background:#dedede;"></div>
<div class="r" style="left:1593px;top:535px;width:1px;height:240px;background:#dedede;"></div>
<div class="r" style="left:1664px;top:535px;width:1px;height:240px;background:#dedede;"></div>
<div class="r" style="left:1872px;top:535px;width:9px;height:240px;background:#f6f6f6;"></div>
<div class="r" style="left:1873.5px;top:547.5px;width:6px;height:121.5px;background:#c6c6c6;border-radius:3px;"></div>
<svg style="left:1873px;top:537px" width="7" height="5"><path d="M0.5 4.5h6L3.5 0.5z" fill="#bbb"/></svg>
<svg style="left:1873px;top:768px" width="7" height="5"><path d="M0.5 0.5h6L3.5 4.5z" fill="#bbb"/></svg>
</body></html>
